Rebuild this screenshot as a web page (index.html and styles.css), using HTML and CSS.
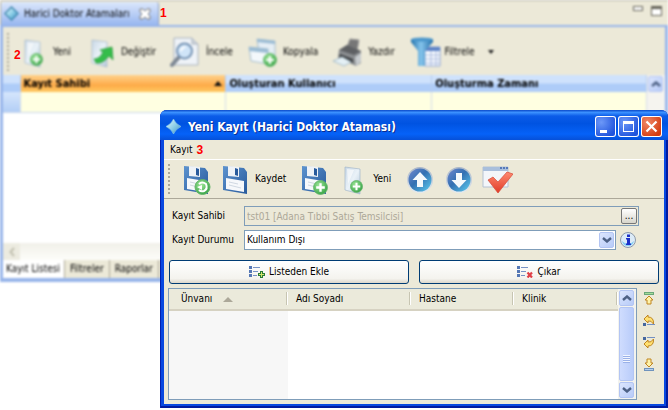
FILE: index.html
```html
<!DOCTYPE html>
<html lang="tr">
<head>
<meta charset="utf-8">
<title>Harici Doktor Atamaları</title>
<link rel="stylesheet" href="styles.css">
</head>
<body>
<svg class="defs" aria-hidden="true">
  <defs>
    <linearGradient id="gGem" x1="0" y1="0" x2="1" y2="1"><stop offset="0" stop-color="#e4f8fc"/><stop offset=".5" stop-color="#8fd0e8"/><stop offset="1" stop-color="#3a8fc0"/></linearGradient>
    <linearGradient id="gPage" x1="0" y1="0" x2="1" y2="1"><stop offset="0" stop-color="#c9d8e6"/><stop offset=".5" stop-color="#eaf2f8"/><stop offset="1" stop-color="#b2c7d9"/></linearGradient>
    <radialGradient id="gGreen" cx=".4" cy=".35" r=".7"><stop offset="0" stop-color="#a0e89a"/><stop offset="1" stop-color="#33a043"/></radialGradient>
    <linearGradient id="gDisk" x1="0" y1="0" x2="1" y2="1"><stop offset="0" stop-color="#5d93cf"/><stop offset="1" stop-color="#285a9c"/></linearGradient>
    <linearGradient id="gOrb" x1="0" y1="0" x2="1" y2="1"><stop offset="0" stop-color="#7288cf"/><stop offset=".45" stop-color="#3470b2"/><stop offset="1" stop-color="#5ccdf0"/></linearGradient>
    <linearGradient id="gRim" x1="0" y1="0" x2="0" y2="1"><stop offset="0" stop-color="#a9b6c8"/><stop offset="1" stop-color="#e4eaf0"/></linearGradient>
    <linearGradient id="gFun" x1="0" y1="0" x2="1" y2="0"><stop offset="0" stop-color="#1f6fa9"/><stop offset=".45" stop-color="#86c5ec"/><stop offset="1" stop-color="#246fa9"/></linearGradient>
    <linearGradient id="gRed" x1="0" y1="0" x2="0" y2="1"><stop offset="0" stop-color="#ff8a70"/><stop offset="1" stop-color="#e03c28"/></linearGradient>
    <symbol id="gem" viewBox="0 0 16 16"><path d="M8 0Q10 5 16 8Q10 11 8 16Q6 11 0 8Q6 5 8 0Z" fill="url(#gGem)" stroke="#8fcbe4" stroke-width=".6"/></symbol>
    <symbol id="gemWide" viewBox="0 0 16 16"><path d="M8 0L16 8L8 16L0 8Z" fill="#3f87ad"/><path d="M8 2L14 8L8 14L2 8Z" fill="url(#gGem)"/></symbol>
    <symbol id="plus" viewBox="0 0 14 14"><circle cx="7" cy="7" r="6.5" fill="url(#gGreen)" stroke="#65b56a" stroke-width=".8"/><path d="M7 3V11M3 7H11" stroke="#fff" stroke-width="2.2"/></symbol>
    <symbol id="new" viewBox="0 0 32 32"><path d="M8 4L23 6V31L8 27Z" fill="url(#gPage)" stroke="#a5b8ca" stroke-width=".7"/><path d="M10 6L17 7L11 21Z" fill="#fff" opacity=".6"/><use href="#plus" x="13" y="17" width="13" height="13"/></symbol>
    <symbol id="edit" viewBox="0 0 32 32"><path d="M7 4L22 6V31L7 27Z" fill="url(#gPage)" stroke="#a5b8ca" stroke-width=".7"/><path d="M9 23Q15 23 18 16L15 14L27 11L28 24L24 20Q18 28 11 27Z" fill="#35bd4a" stroke="#289339" stroke-width=".7"/></symbol>
    <symbol id="view" viewBox="0 0 32 32"><path d="M4 2H22L28 8V29H4Z" fill="#eff3f8" stroke="#aab3bd"/><path d="M22 2V8H28" fill="#cbd2da" stroke="#aab3bd"/><path d="M9 21L2 29" stroke="#7e8894" stroke-width="4" stroke-linecap="round"/><circle cx="14.5" cy="15" r="7.5" fill="#cfe4f8" stroke="#7895b5" stroke-width="2"/><path d="M10 14Q12 9 17 11Q13 12 11 16Z" fill="#fff"/></symbol>
    <symbol id="copy" viewBox="0 0 32 32"><path d="M10 3L28 5V20L12 18Z" fill="#e5eef5" stroke="#a8bfce"/><path d="M10 3L28 5V8L10 6Z" fill="#9bbcd4"/><path d="M2 11L21 13V28L4 25Z" fill="#f3f8fb" stroke="#a8bfce"/><path d="M2 11L21 13V17L2 15Z" fill="#9bbcd4"/><use href="#plus" x="16" y="17" width="14" height="14"/></symbol>
    <symbol id="print" viewBox="0 0 32 32"><path d="M15 11L18 3L27 4L25 15Z" fill="#777" stroke="#999"/><path d="M7 14L15 9L29 15V27L24 30L6 22Z" fill="#8b8e91"/><path d="M7 14L15 9L29 15L22 19Z" fill="#5e6063"/><path d="M8 18L21 23V27L7 21Z" fill="#3f4245"/><path d="M23 21L29 17V26L24 30Z" fill="#c7cbce"/><path d="M1 25L10 21L19 26L12 30Z" fill="#e4f0f5" stroke="#a9bdc8"/></symbol>
    <symbol id="filter" viewBox="0 0 32 32"><path d="M16 11H31V30H16Z" fill="#f8fbff" stroke="#8fa5d2"/><path d="M16 11H31V15H16Z" fill="#5f84c7"/><path d="M16 19H31M16 23H31M16 27H31M22 15V30M27 15V30" stroke="#a8b8dc"/><path d="M2 3H24V6L16 15V30H9V15L2 6Z" fill="url(#gFun)"/><ellipse cx="13" cy="3.500" rx="11" ry="2" fill="#4b97cc"/></symbol>
    <symbol id="disk" viewBox="0 0 32 32"><path d="M4 3L25 5L28 9V31L4 27Z" fill="url(#gDisk)"/><path d="M9 3L20 4V14L9 13Z" fill="#eef2f7"/><path d="M16 5L19 6V13L16 12Z" fill="#285a9c"/><path d="M7 15L25 18V29L7 26Z" fill="#f6f8fb"/><path d="M10 19L19 21M10 22L22 25" stroke="#d0d8e2"/></symbol>
    <symbol id="diskPlus" viewBox="0 0 32 32"><use href="#disk"/><use href="#plus" x="15" y="17" width="15" height="15"/></symbol>
    <symbol id="diskRefresh" viewBox="0 0 32 32"><use href="#disk"/><circle cx="22.500" cy="24" r="7.500" fill="url(#gGreen)" stroke="#65b56a"/><path d="M19 21Q22 18 26 21Q28 26 24 28Q21 29 19 27" fill="none" stroke="#fff" stroke-width="2"/><path d="M17 24L22 22V27Z" fill="#fff"/></symbol>
    <symbol id="up" viewBox="0 0 32 32"><circle cx="17" cy="17" r="13" fill="url(#gRim)"/><circle cx="17" cy="17" r="11.500" fill="url(#gOrb)"/><path d="M17 9L24.500 17H20V24H14V17H9.500Z" fill="#f5f9fc"/></symbol>
    <symbol id="down" viewBox="0 0 32 32"><circle cx="17" cy="17" r="13" fill="url(#gRim)"/><circle cx="17" cy="17" r="11.500" fill="url(#gOrb)"/><path d="M17 25L24.500 17H20V10H14V17H9.500Z" fill="#f5f9fc"/></symbol>
    <symbol id="check" viewBox="0 0 32 32"><path d="M2 4H27V24H2Z" fill="#f3f6fa" stroke="#b5c2d2"/><path d="M2 4H27V8H2Z" fill="#a9bfdc"/><path d="M19 5H21M22 5H24M25 5H27" stroke="#3d63ad" stroke-width="1.500"/><path d="M7 17L12 14L17 19L26 9L32 11L17 30Z" fill="url(#gRed)" stroke="#d64a38" stroke-width=".7"/></symbol>
    <symbol id="listAdd" viewBox="0 0 16 12"><path d="M0 0H3V3H0ZM0 4H3V7H0ZM0 8H3V11H0Z" fill="#5577b5"/><path d="M4 1.500H11M4 5.500H9M4 9.500H8" stroke="#7893c6"/><path d="M11 5H14V7H16V10H14V12H11V10H9V7H11Z" fill="#287a38"/><path d="M12.500 6V11M10 8.500H15" stroke="#d4e56c"/></symbol>
    <symbol id="listDel" viewBox="0 0 16 12"><path d="M0 0H3V3H0ZM0 4H3V7H0ZM0 8H3V11H0Z" fill="#5577b5"/><path d="M4 1.500H11M4 5.500H9M4 9.500H8" stroke="#7893c6"/><path d="M10.500 6.500L15 11.500M15 6.500L10.500 11.500" stroke="#e04048" stroke-width="2.200"/></symbol>
    <symbol id="chevUp" viewBox="0 0 10 6"><path d="M1 5L5 1.500L9 5" fill="none" stroke="#4d6185" stroke-width="2.400"/></symbol>
    <symbol id="chevDown" viewBox="0 0 10 6"><path d="M1 1L5 4.500L9 1" fill="none" stroke="#4d6185" stroke-width="2.400"/></symbol>
    <symbol id="chevLeft" viewBox="0 0 6 10"><path d="M5 1L1.500 5L5 9" fill="none" stroke="#c2c0b0" stroke-width="2"/></symbol>
    <symbol id="mTop" viewBox="0 0 12 14"><rect x="1.500" y="1.500" width="9" height="2" fill="#a4dc98" stroke="#6aa779"/><path d="M6 5L10 9H8V13H4V9H2Z" fill="#fff3a8" stroke="#c08520"/></symbol>
    <symbol id="mUp" viewBox="0 0 12 14"><path d="M5 2L5 4Q11 4 10.500 11Q8 7 5 8V10L1 6Z" fill="#ffe070" stroke="#c08520"/><path d="M0 10H3V13H0Z" fill="#46679f"/><path d="M4 11.500H12" stroke="#7590c0"/></symbol>
    <symbol id="mDown" viewBox="0 0 12 14"><path d="M10.500 3Q8 7 5 6V4L1 8L5 12V10Q11 10 10.500 3Z" fill="#ffe070" stroke="#c08520"/><path d="M0 1H3V4H0Z" fill="#46679f"/><path d="M4 1.500H12" stroke="#7590c0"/></symbol>
    <symbol id="mBottom" viewBox="0 0 12 14"><path d="M6 9L10 5H8V1H4V5H2Z" fill="#fff3a8" stroke="#c08520"/><rect x="1.500" y="10.500" width="9" height="2" fill="#b4cfee" stroke="#6f93bd"/></symbol>
    <symbol id="info" viewBox="0 0 16 16"><circle cx="8" cy="8" r="7.500" fill="#dcebf8" stroke="#8d9aaa"/><path d="M2 9Q8 15 14 9Q13 14 8 14Q3 14 2 9Z" fill="#82cdf2"/><path d="M7 2.500H10V5H7ZM6 6H10V11.500H11V13H6V11.500H7V7.500H6Z" fill="#1c31c8"/></symbol>
  </defs>
</svg>

<main class="workspace">
  <section class="view">
    <header class="view-tabs">
      <div class="view-tab">
        <svg class="gem"><use href="#gemWide"/></svg>
        <span>Harici Doktor Atamaları</span>
        <button class="tab-close" aria-label="Kapat"><svg viewBox="0 0 12 12"><path d="M1 1H4L6 3L8 1H11V4L9 6L11 8V11H8L6 9L4 11H1V8L3 6L1 4Z" fill="#fff" stroke="#777"/></svg></button>
      </div>
      <div class="view-controls">
        <button class="pane-min" aria-label="Küçült"></button>
        <button class="pane-max" aria-label="Büyüt"></button>
      </div>
    </header>
    <div class="view-body">
      <nav class="toolbar">
        <i class="grip"></i>
        <button class="tool"><svg><use href="#new"/></svg>Yeni</button>
        <button class="tool"><svg><use href="#edit"/></svg>Değiştir</button>
        <button class="tool"><svg><use href="#view"/></svg>İncele</button>
        <button class="tool"><svg><use href="#copy"/></svg>Kopyala</button>
        <button class="tool"><svg><use href="#print"/></svg>Yazdır</button>
        <button class="tool"><svg><use href="#filter"/></svg>Filtrele<i class="caret"></i></button>
      </nav>
      <div class="records">
        <table class="grid">
          <colgroup><col class="gutter"><col class="wide"><col class="wide"><col></colgroup>
          <thead><tr><th></th><th class="sorted"><span>Kayıt Sahibi</span></th><th>Oluşturan Kullanıcı</th><th>Oluşturma Zamanı</th></tr></thead>
          <tbody><tr><td></td><td></td><td></td><td></td></tr></tbody>
        </table>
        <div class="vtrack"><button class="scroll-button" aria-label="Yukarı kaydır"><svg><use href="#chevUp"/></svg></button></div>
      </div>
      <div class="htrack"><button aria-label="Sola kaydır"><svg><use href="#chevLeft"/></svg></button></div>
      <nav class="page-tabs">
        <button class="current">Kayıt Listesi</button>
        <button>Filtreler</button>
        <button>Raporlar</button>
      </nav>
    </div>
  </section>
  <b class="mark mark-tab">1</b>
  <b class="mark mark-new">2</b>

  <section class="dialog" role="dialog" aria-labelledby="dialogTitle">
    <header class="titlebar">
      <svg class="gem"><use href="#gem"/></svg>
      <h1 id="dialogTitle">Yeni Kayıt (Harici Doktor Ataması)</h1>
      <button class="win" aria-label="Simge durumuna küçült"><svg viewBox="0 0 21 21"><path d="M5 14H12V17H5Z" fill="#fff"/></svg></button>
      <button class="win" aria-label="Ekranı kapla"><svg viewBox="0 0 21 21"><path d="M5 5H16V16H5ZM6 8V15H15V8Z" fill="#fff" fill-rule="evenodd"/></svg></button>
      <button class="win close" aria-label="Kapat"><svg viewBox="0 0 21 21"><path d="M5.500 5.500L15.500 15.500M15.500 5.500L5.500 15.500" stroke="#fff" stroke-width="2.200"/></svg></button>
    </header>
    <div class="dialog-body">
      <nav class="menubar"><button>Kayıt</button><b class="red">3</b></nav>
      <nav class="toolbar commands">
        <i class="grip"></i>
        <button class="tool" aria-label="Kaydet ve yenile"><svg><use href="#diskRefresh"/></svg></button>
        <button class="tool labelled"><svg><use href="#disk"/></svg>Kaydet</button>
        <button class="tool" aria-label="Kaydet ve yeni"><svg><use href="#diskPlus"/></svg></button>
        <button class="tool labelled"><svg><use href="#new"/></svg>Yeni</button>
        <button class="tool" aria-label="Önceki"><svg><use href="#up"/></svg></button>
        <button class="tool" aria-label="Sonraki"><svg><use href="#down"/></svg></button>
        <button class="tool" aria-label="Onayla"><svg><use href="#check"/></svg></button>
      </nav>
      <form class="form">
        <label for="owner">Kayıt Sahibi</label>
        <div class="lookup">
          <input id="owner" value="tst01 [Adana Tıbbi Satış Temsilcisi]" disabled>
          <button type="button" aria-label="Seç">...</button>
        </div>
        <label for="state">Kayıt Durumu</label>
        <div class="state-row">
          <div class="combo">
            <select id="state"><option>Kullanım Dışı</option></select>
            <span class="scroll-button"><svg><use href="#chevDown"/></svg></span>
          </div>
          <svg class="info"><use href="#info"/></svg>
        </div>
      </form>
      <div class="actions">
        <button><svg><use href="#listAdd"/></svg>Listeden Ekle</button>
        <button><svg><use href="#listDel"/></svg>Çıkar</button>
      </div>
      <div class="list-row">
        <div class="list">
          <table>
            <colgroup><col class="c1"><col class="c2"><col class="c3"><col></colgroup>
            <thead><tr><th>Ünvanı<i class="sort"></i></th><th>Adı Soyadı</th><th>Hastane</th><th>Klinik</th></tr></thead>
            <tbody><tr><td></td><td></td><td></td><td></td></tr></tbody>
          </table>
          <div class="scrollbar">
            <button class="scroll-button" aria-label="Yukarı"><svg><use href="#chevUp"/></svg></button>
            <div class="thumb"><i></i></div>
            <button class="scroll-button" aria-label="Aşağı"><svg><use href="#chevDown"/></svg></button>
          </div>
        </div>
        <div class="order">
          <button aria-label="En üste"><svg><use href="#mTop"/></svg></button>
          <button aria-label="Yukarı taşı"><svg><use href="#mUp"/></svg></button>
          <button aria-label="Aşağı taşı"><svg><use href="#mDown"/></svg></button>
          <button aria-label="En alta"><svg><use href="#mBottom"/></svg></button>
        </div>
      </div>
    </div>
  </section>
</main>
</body>
</html>
```

FILE: styles.css
```css
* { box-sizing: border-box; }

body {
  margin: 0;
  background: #fff;
  color: #000;
  font: 10px/14px "DejaVu Sans Condensed", "Liberation Sans", sans-serif;
}

button, input, select { font: inherit; color: inherit; }
button { margin: 0; padding: 0; border: 0; background: none; }
svg { display: block; flex: none; }
.defs { position: absolute; width: 0; height: 0; }

.workspace { position: relative; min-height: 410px; overflow: hidden; }

/* Background view */
.view {
  padding-top: 1px;
  border-top: 1px solid #b8b5a8;
  background: #ece9d8;
  filter: blur(1px);
}
.view-tabs {
  display: flex;
  justify-content: space-between;
  height: 23px;
  border-left: 1px solid #aca899;
}
.view-tab {
  display: flex;
  align-items: center;
  gap: 5px;
  width: 158px;
  padding-left: 3px;
  border-right: 1px solid #8ba0c8;
  border-radius: 3px 3px 0 0;
  background: linear-gradient(#dce7fb, #98b7f0);
}
.gem { width: 15px; height: 15px; }
.tab-close { margin-left: 4px; }
.tab-close svg { width: 12px; height: 12px; }
.view-controls { display: flex; gap: 8px; padding: 4px 6px 0 0; }
.pane-min { width: 10px; height: 5px; border: 1px solid #66645a; background: #fff; }
.pane-max { width: 11px; height: 10px; border: 1px solid #66645a; border-top-width: 3px; background: #fff; }
.view-body {
  padding-top: 1px;
  border: 3px solid #98b5ea;
  border-top-width: 2px;
  border-bottom-width: 4px;
}

.toolbar { display: flex; align-items: center; gap: 14px; height: 47px; padding-left: 4px; }
.grip { width: 2px; height: 38px; margin-right: -6px; background: repeating-linear-gradient(#aaa799 0 2px, transparent 2px 4px); }
.tool { display: flex; align-items: center; gap: 4px; }
.tool svg { width: 32px; height: 32px; }
.caret { margin-left: 9px; border: 3px solid transparent; border-top: 4px solid #222; border-bottom: 0; }

.records { display: flex; min-height: 168px; background: #fff; }
.grid { flex: 1; align-self: flex-start; width: 100%; border-collapse: collapse; table-layout: fixed; }
.grid .gutter { width: 17px; }
.grid .wide { width: 32%; }
.grid th {
  height: 17px;
  padding: 0 3px;
  border-right: 1px solid #b7cdee;
  background: linear-gradient(#cfe2fc 0 45%, #aeccf8 55%);
  text-align: left;
  font-size: 11px;
  line-height: 15px;
}
.grid td { height: 20px; padding: 0; border-right: 1px solid #d5ddea; border-bottom: 1px solid #c9d6ea; background: #ffffe1; }
.grid td:first-child { background: linear-gradient(#d6e6fc, #b2cef6); }
.grid .sorted { background: linear-gradient(#ffd28c, #fdaa48 60%, #ffc860); }
.sorted span { display: flex; align-items: center; justify-content: space-between; }
.sorted span::after { content: ""; border: 4px solid transparent; border-top: 0; border-bottom: 5px solid #111; }
.vtrack { width: 18px; padding: 1px; background: #f5f4ef; }
.scroll-button {
  display: flex;
  align-items: center;
  justify-content: center;
  width: 15px;
  height: 16px;
  border: 1px solid #b3c5f3;
  border-radius: 2px;
  background: linear-gradient(135deg, #dce6fe, #b7cbf8);
}
.scroll-button svg { width: 10px; height: 6px; }
.htrack { height: 17px; background: linear-gradient(#f1f0e9, #fdfdfa); }
.htrack button { display: flex; align-items: center; justify-content: center; width: 17px; height: 17px; background: #ecebe0; }
.htrack svg { width: 6px; height: 10px; }
.page-tabs { display: flex; height: 18px; }
.page-tabs button { padding: 0 5px; border-right: 1px solid #aca899; }
.page-tabs .current { padding: 0 4px 0 3px; background: #fff; }

.mark, .red { color: #f00; font: bold 12px/14px "Liberation Sans", sans-serif; }
.mark { position: absolute; }
.mark-tab { left: 160px; top: 6px; }
.mark-new { left: 14px; top: 48px; }

/* Record dialog */
.dialog {
  position: absolute;
  left: 160px;
  right: 0;
  top: 110px;
  padding: 0 4px 4px;
  border-radius: 7px 7px 0 0;
  background: #0848e0;
  box-shadow: inset 1px 0 #0020b0, inset -2px -2px #001ba0;
}
.titlebar {
  display: flex;
  align-items: center;
  gap: 2px;
  height: 30px;
  margin: 0 -4px;
  padding: 3px 6px 0;
  border-radius: 7px 7px 0 0;
  background: linear-gradient(#0a48c8, #3c92ff 8%, #0b5ce8 20%, #0053e1 45%, #0562f8 80%, #0650d8);
}
.titlebar h1 {
  flex: 1;
  margin: 0 0 0 5px;
  color: #fff;
  font: bold 12px/16px "DejaVu Sans Condensed", sans-serif;
  text-shadow: 1px 1px #0a2c90;
}
.win {
  width: 21px;
  height: 21px;
  border-radius: 3px;
  background: radial-gradient(circle at 30% 30%, #6c98f8, #2054dc 75%);
  box-shadow: inset 0 0 0 1px #fff;
}
.win.close { background: radial-gradient(circle at 30% 30%, #f08868, #d43c10 75%); }
.dialog-body { padding-bottom: 4px; background: #ece9d8; }
.menubar { display: flex; align-items: center; gap: 4px; height: 20px; padding-left: 6px; border-bottom: 1px solid #fff; }
.commands { gap: 7px; height: 39px; border-bottom: 1px solid #aca899; }
.commands .grip { height: 30px; margin-right: 3px; }
.labelled { padding-right: 5px; }
.form { display: grid; grid-template-columns: 72px 1fr; gap: 4px 0; padding: 7px 25px 0 8px; align-items: center; }
.lookup, .combo { display: flex; align-items: center; height: 20px; border: 1px solid #7f9db9; }
.lookup { padding-right: 1px; }
.lookup input, .combo select { flex: 1; min-width: 0; height: 18px; padding: 0 2px; border: 0; background: none; appearance: none; }
.lookup input { color: #aca899; }
.lookup button {
  width: 16px;
  height: 16px;
  border: 1px solid #777;
  border-radius: 2px;
  background: linear-gradient(#fff, #d8d6cc);
  line-height: 10px;
}
.state-row { display: flex; align-items: center; gap: 4px; padding-right: 3px; }
.combo { flex: 1; padding-right: 1px; background: #fff; }
.info { width: 16px; height: 16px; }
.actions { display: grid; grid-template-columns: 1fr 1fr; gap: 10px; padding: 10px 5px 0; }
.actions button {
  display: flex;
  align-items: center;
  justify-content: center;
  gap: 4px;
  height: 24px;
  border: 1px solid #003c74;
  border-radius: 3px;
  background: linear-gradient(#fff, #f4f3ee 80%, #dcd7cb);
}
.actions svg { width: 16px; height: 12px; }
.list-row { display: flex; gap: 6px; padding: 4px 9px 0 4px; }
.list { display: flex; flex: 1; min-height: 112px; border: 1px solid #7f9db9; background: #fff; }
.list table { flex: 1; border-collapse: collapse; table-layout: fixed; }
.c1 { width: 119px; }
.c2 { width: 123px; }
.c3 { width: 103px; }
.list th {
  height: 21px;
  padding: 0 8px;
  border-bottom: 2px solid #d6d2c2;
  background: linear-gradient(90deg, transparent calc(100% - 2px), #c7c5b2 calc(100% - 2px) calc(100% - 1px), #fff calc(100% - 1px)) 0 3px / 100% 13px no-repeat #ebeadb;
  font-weight: normal;
  text-align: left;
}
.list th:first-child { padding-left: 12px; }
.sort { display: inline-block; margin-left: 11px; border: 5px solid transparent; border-top: 0; border-bottom: 5px solid #aca899; }
.list td { padding: 0; }
.list td:first-child { background: #f7f7f7; }
.scrollbar { display: flex; flex-direction: column; gap: 1px; width: 18px; padding: 1px; background: #f3f3ee; }
.thumb {
  display: flex;
  flex: 1;
  align-items: center;
  justify-content: center;
  width: 15px;
  padding-top: 30px;
  border: 1px solid #b3c5f3;
  border-radius: 2px;
  background: linear-gradient(90deg, #cfdcfe, #b9ccfa);
}
.thumb i { width: 7px; height: 8px; background: repeating-linear-gradient(#f2f6ff 0 1px, #9ab1e8 1px 2px); }
.order { display: flex; flex-direction: column; justify-content: space-between; padding: 3px 0 28px; }
.order svg { width: 12px; height: 14px; }
```
